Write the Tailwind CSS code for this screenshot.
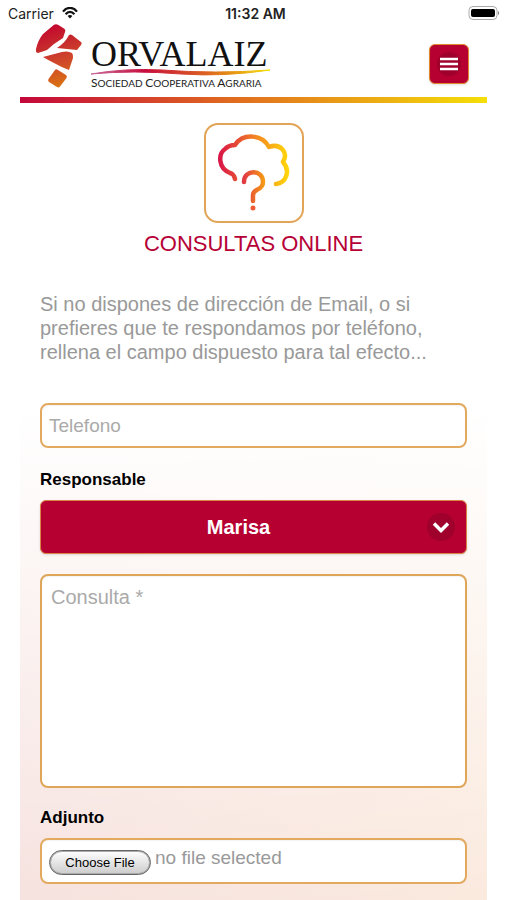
<!DOCTYPE html>
<html lang="es">
<head>
<meta charset="utf-8">
<meta name="viewport" content="width=device-width, initial-scale=1">
<title>Consultas online</title>
<script src="https://cdn.jsdelivr.net/npm/@tailwindcss/browser@4"></script>
</head>
<body class="bg-white font-['Liberation_Sans',Arial,sans-serif] text-black">
<div class="flex min-h-screen flex-col">
  <!-- Status bar -->
  <div class="grid h-[26px] grid-cols-3 items-center px-2 font-[Inter,sans-serif] text-[14px] text-[#222]">
    <div class="flex items-center gap-2">
      <span>Carrier</span>
      <svg class="h-3 w-4" viewBox="0 0 16 12" fill="none" stroke="#111" stroke-width="2.200"><path d="M1 4.6C5-.4 11-.4 15 4.6M3.6 7.2c2.600-3 6.200-3 8.800 0"/><path d="M8 11.500 5.600 9c1.300-1.400 3.500-1.400 4.800 0Z" fill="#111" stroke="none"/></svg>
    </div>
    <span class="pl-1 text-center font-semibold">11:32 AM</span>
    <svg class="h-4 w-8 justify-self-end" viewBox="0 0 32 16"><rect x="2" y="1.500" width="28" height="13" rx="4" fill="#fff" stroke="#aaa"/><rect x="4" y="4" width="24" height="8" rx="2" fill="#000"/><path d="M31 6v4q1-.6 1-2t-1-2" fill="#777"/></svg>
  </div>

  <main class="mx-5 flex grow flex-col bg-[linear-gradient(to_bottom,white_44%,transparent_120%),linear-gradient(to_right,#f3d8d4,#f9e2d2)]">
    <header>
      <div class="flex h-[71px] items-start justify-between pr-[18px] pl-[15px]">
        <svg class="-mt-0.5 h-[68px] w-[250px]" viewBox="0 0 250 68" role="img" aria-label="Orvalaiz Sociedad Cooperativa Agraria">
          <defs>
            <linearGradient id="mark" x1="8" y1="0" x2="30" y2="66" gradientUnits="userSpaceOnUse"><stop stop-color="#c4002f"/><stop offset=".35" stop-color="#c62c2c"/><stop offset=".6" stop-color="#d0492a"/><stop offset="1" stop-color="#dc7a0c"/></linearGradient>
            <linearGradient id="brush" x1="56" y1="0" x2="236" y2="0" gradientUnits="userSpaceOnUse"><stop stop-color="#c76a9b"/><stop offset=".3" stop-color="#c70d3c"/><stop offset=".65" stop-color="#dd6420"/><stop offset="1" stop-color="#f5e000"/></linearGradient>
          </defs>
          <g fill="url(#mark)">
            <path d="M19 .8Q21-.5 23 .8L29 4.500Q31 6 30 8L28 14L19 20L12 26L3 29Q.5 29 1 25Q3 16 8 10Z"/>
            <path d="M34 11Q35.500 10 37 11L46 18Q47.500 19.500 46 21L42 26Q32 25 22 24Q30 19 34 11Z"/>
            <path d="M8 33L27 28Q33 26.500 37 29Q38.500 31 38 34L34 46Q26 43 19 39Q13 36 8 33Z"/>
            <path d="M20 46Q21 44.500 23 46L31 51Q32.500 52 31.500 54L25 62.500Q24 64 22 63L14 58Q12.500 57 13.500 55Z"/>
          </g>
          <text x="56" y="42" font-family="Liberation Serif, serif" font-size="36" fill="#111">ORVALAIZ</text>
          <path d="M56 50Q90 44 127 46Q180 50 235 46Q190 53 146 50Q98 46 56 50Z" fill="url(#brush)" stroke="url(#brush)"/>
          <text x="56" y="63" font-family="Lato, sans-serif" font-size="10" fill="#222"><tspan font-size="12">S</tspan>OCIEDAD <tspan font-size="12">C</tspan>OOPERATIVA <tspan font-size="12">A</tspan>GRARIA</text>
        </svg>
        <button type="button" aria-label="Menú" class="mt-[18px] flex size-10 items-center justify-center rounded-md border border-[#e08a2c] bg-[#b60032] shadow-sm">
          <span class="flex size-6 items-center justify-center rounded-full bg-[#9f002c]">
            <svg class="h-4 w-[18px] shrink-0" viewBox="0 0 18 16" stroke="#fff" stroke-width="2.600"><path d="M0 3h18M0 8h18M0 13h18"/></svg>
          </span>
        </button>
      </div>
      <div class="h-1.5 bg-[linear-gradient(to_right,#c3073b,#e06a20_45%,#f5df08)]"></div>
    </header>

    <section class="px-5">
      <svg class="mx-auto mt-5 size-[100px] rounded-[14px] border-2 border-[#e2a558] bg-white" viewBox="0 0 96 96" fill="none" stroke="url(#cloud)" stroke-width="4.500" stroke-linecap="round" stroke-linejoin="round" aria-hidden="true">
        <defs><linearGradient id="cloud" x1="14" y1="0" x2="82" y2="0" gradientUnits="userSpaceOnUse"><stop stop-color="#da1747"/><stop offset=".5" stop-color="#f28022"/><stop offset="1" stop-color="#ffd60a"/></linearGradient>
        <linearGradient id="question" x1="38" y1="0" x2="60" y2="0" gradientUnits="userSpaceOnUse"><stop stop-color="#e13a42"/><stop offset="1" stop-color="#f9a411"/></linearGradient></defs>
        <path d="M29 54C28 50 27 49 24 48C12 43 12 29 19 24C22 21 25 20 29 20C37 8 56 9 63 22C74 18 83 27 77 37C85 46 80 58 70 59"/>
        <g stroke="url(#question)"><path d="M38 57C38 44 57 44 57 57C57 66 47 63 47 70V76"/><circle cx="47" cy="83" r="2.500" fill="#ee5b35" stroke="none"/></g>
      </svg>
      <h1 class="mt-[5px] text-center text-[22px] leading-8 text-[#b60036]">CONSULTAS ONLINE</h1>
      <p class="mt-8 text-[20px] leading-6 text-[#999]">Si no dispones de dirección de Email, o si prefieres que te respondamos por teléfono, rellena el campo dispuesto para tal efecto...</p>

      <form class="mt-[39px] flex flex-col pb-4">
        <input type="tel" aria-label="Telefono" placeholder="Telefono" class="h-[45px] w-full rounded-lg border-2 border-[#e2a95f] bg-white px-[7px] text-[19px] inset-shadow-xs placeholder:text-[#aaa]">
        <label for="responsable" class="mt-5 text-[17px] leading-6 font-bold">Responsable</label>
        <div class="relative mt-2">
          <select id="responsable" class="h-[54px] w-full appearance-none rounded-md border border-[#d98545] bg-[#b60032] pr-[38px] pl-2 text-center text-[20px] font-bold text-white shadow-sm [text-align-last:center]">
            <option>Marisa</option>
          </select>
          <span class="pointer-events-none absolute inset-y-0 right-3 flex items-center">
            <span class="flex size-7 items-center justify-center rounded-full bg-[#9f002c]"><svg class="h-3 w-4" viewBox="0 0 16 12" fill="none" stroke="#fff" stroke-width="3.500"><path d="m1 2.500 7 7 7-7"/></svg></span>
          </span>
        </div>
        <textarea aria-label="Consulta" placeholder="Consulta *" class="mt-5 h-[214px] w-full resize-none rounded-lg border-2 border-[#dfa558] bg-white px-[9px] py-[7px] text-[20px] leading-7 inset-shadow-xs placeholder:text-[#aaa]"></textarea>
        <label for="adjunto" class="mt-[18px] text-[17px] leading-6 font-bold">Adjunto</label>
        <label for="adjunto" class="relative mt-2 flex h-[46px] w-full items-start gap-1 rounded-lg border-2 border-[#e2a95f] bg-white px-[7px] inset-shadow-xs">
          <input id="adjunto" type="file" class="sr-only">
          <span class="mt-2.5 flex h-[25px] w-[102px] items-center justify-center rounded-full border border-[#666] bg-linear-to-b from-white to-[#ccc] text-[13px] shadow-[inset_0_0_0_1px_#aaa]">Choose File</span>
          <span class="mt-1.5 text-[19px] leading-6 text-[#999]">no file selected</span>
        </label>
      </form>
    </section>
  </main>
</div>
</body>
</html>
